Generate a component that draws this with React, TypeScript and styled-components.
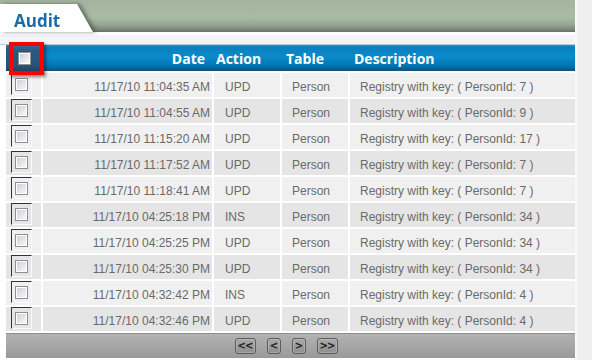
import styled, { createGlobalStyle } from "styled-components";

const GlobalStyle = createGlobalStyle`
  html, body {
    margin: 0;
    padding: 0;
    background: #ffffff;
  }
  body {
    font-family: "Liberation Sans", Arial, sans-serif;
  }
`;

const COLUMNS = "35px 169px 66px 66px 1fr";

const Page = styled.div`
  display: flex;
  width: 592px;
  height: 360px;
  overflow: hidden;
`;

const Main = styled.div`
  flex: 0 0 575px;
  display: flex;
  flex-direction: column;
`;

const ScrollStrip = styled.div`
  flex: 1;
  background: #efefef;
  border-left: 2px solid #f9f9f9;
`;

const TopBand = styled.div`
  height: 32px;
  box-sizing: border-box;
  padding-top: 4px;
  background: linear-gradient(
    #a3b59f 0%,
    #a9bba5 55%,
    #96a591 78%,
    #7d887a 92%,
    #666f63 100%
  );
`;

const TabShadow = styled.div`
  display: inline-block;
  filter: drop-shadow(3px 0 2px rgba(40, 50, 38, 0.55));
`;

const Tab = styled.div`
  width: 93px;
  height: 28px;
  box-sizing: border-box;
  padding: 5px 0 0 14px;
  background: #ffffff;
  clip-path: polygon(0 0, 77px 0, 100% 100%, 0 100%);
  color: #1b6ca6;
  font-family: "Open Sans", sans-serif;
  font-weight: 700;
  font-size: 17px;
  line-height: 23px;
`;

const Band = styled.div`
  height: 13px;
  background: linear-gradient(
    #ffffff 0px,
    #ffffff 3px,
    #f3f4f7 3px,
    #f3f4f7 12px,
    #b4cbdd 12px
  );
`;

const Grid = styled.div`
  padding-left: 6px;
`;

const HeaderRow = styled.div`
  position: relative;
  display: grid;
  grid-template-columns: ${COLUMNS};
  column-gap: 2px;
  height: 26px;
  background: linear-gradient(
    #3f86b8 0%,
    #0a7fbf 10%,
    #0a8bcb 45%,
    #0278b6 75%,
    #03629a 92%,
    #1d4c6e 100%
  );
  color: #ffffff;
  font-family: "Open Sans", sans-serif;
  font-weight: 700;
  font-size: 14px;
`;

const HeadCell = styled.div<{ $right?: boolean; $pad: number }>`
  display: flex;
  align-items: center;
  justify-content: ${(p) => (p.$right ? "flex-end" : "flex-start")};
  padding: ${(p) => (p.$right ? `0 ${p.$pad}px 0 0` : `0 0 0 ${p.$pad}px`)};
  white-space: nowrap;
`;

const CheckHeadCell = styled.div`
  display: flex;
  align-items: center;
  padding-left: 12px;
  margin-right: -2px;
  background: linear-gradient(#3c6d92 0%, #2a5a7f 20%, #265479 80%, #1d4565 100%);
`;

const Highlight = styled.div`
  position: absolute;
  left: 3px;
  top: -3px;
  width: 35px;
  height: 33px;
  box-sizing: border-box;
  border: 4px solid #ff0000;
  box-shadow: 2px 2px 3px rgba(0, 0, 0, 0.45);
  pointer-events: none;
`;

const Row = styled.div`
  display: grid;
  grid-template-columns: ${COLUMNS};
  column-gap: 2px;
  margin-top: 2px;
  height: 24px;
  color: #6a6a6a;
  font-size: 12px;
`;

const Cell = styled.div<{ $alt: boolean; $right?: boolean; $pad: number }>`
  display: flex;
  align-items: center;
  justify-content: ${(p) => (p.$right ? "flex-end" : "flex-start")};
  padding: ${(p) => (p.$right ? `3px ${p.$pad}px 0 0` : `3px 0 0 ${p.$pad}px`)};
  background: ${(p) => (p.$alt ? "#e5e5e5" : "#f0f0f0")};
  white-space: nowrap;
`;

const CheckCell = styled.div<{ $alt: boolean }>`
  display: flex;
  align-items: flex-start;
  padding-left: 5px;
  background: ${(p) => (p.$alt ? "#e5e5e5" : "#f0f0f0")};
`;

const Frame = styled.div`
  width: 21px;
  height: 22px;
  box-sizing: border-box;
  display: flex;
  align-items: center;
  justify-content: center;
  border-top: 1px solid #333333;
  border-left: 1px solid #333333;
  border-right: 1px solid #fafafa;
  border-bottom: 1px solid #fafafa;
`;

const Check = styled.span`
  display: block;
  width: 13px;
  height: 13px;
  box-sizing: border-box;
  border: 1px solid #8e8f91;
  box-shadow: inset 0 0 0 1px #ffffff;
  background: linear-gradient(135deg, #c9cdd6 0%, #e4e6eb 55%, #fbfbfc 100%);
`;

const Pager = styled.div`
  margin-top: 2px;
  height: 25px;
  box-sizing: border-box;
  display: flex;
  align-items: center;
  justify-content: center;
  gap: 11px;
  padding-right: 8px;
  border-top: 1px solid #8e8e8e;
  background: linear-gradient(#b2b2b2 0%, #a6a6a6 50%, #999999 100%);
`;

const PageButton = styled.button<{ $w: number }>`
  width: ${(p) => p.$w}px;
  height: 16px;
  padding: 0;
  box-sizing: border-box;
  border: 1px solid #5c5c5c;
  border-radius: 3px;
  background: linear-gradient(#a8a8a8, #909090);
  box-shadow: inset 0 0 0 1px rgba(255, 255, 255, 0.2);
  color: #1e1e1e;
  font-family: "DejaVu Sans", sans-serif;
  font-weight: 700;
  font-size: 10px;
  line-height: 14px;
  letter-spacing: -1px;
  text-indent: -1px;
`;

const rows = [
  ["11/17/10 11:04:35 AM", "UPD", "Person", "7"],
  ["11/17/10 11:04:55 AM", "UPD", "Person", "9"],
  ["11/17/10 11:15:20 AM", "UPD", "Person", "17"],
  ["11/17/10 11:17:52 AM", "UPD", "Person", "7"],
  ["11/17/10 11:18:41 AM", "UPD", "Person", "7"],
  ["11/17/10 04:25:18 PM", "INS", "Person", "34"],
  ["11/17/10 04:25:25 PM", "UPD", "Person", "34"],
  ["11/17/10 04:25:30 PM", "UPD", "Person", "34"],
  ["11/17/10 04:32:42 PM", "INS", "Person", "4"],
  ["11/17/10 04:32:46 PM", "UPD", "Person", "4"],
];

const App = () => (
  <>
    <GlobalStyle />
    <Page>
      <Main>
        <TopBand>
          <TabShadow>
            <Tab>Audit</Tab>
          </TabShadow>
        </TopBand>
        <Band />
        <Grid>
          <HeaderRow>
            <CheckHeadCell>
              <Check />
            </CheckHeadCell>
            <HeadCell $right $pad={7}>Date</HeadCell>
            <HeadCell $pad={2}>Action</HeadCell>
            <HeadCell $pad={4}>Table</HeadCell>
            <HeadCell $pad={4}>Description</HeadCell>
            <Highlight />
          </HeaderRow>
          {rows.map(([date, action, table, id], i) => {
            const alt = i % 2 === 1;
            return (
              <Row key={date}>
                <CheckCell $alt={alt}>
                  <Frame>
                    <Check />
                  </Frame>
                </CheckCell>
                <Cell $alt={alt} $right $pad={2}>{date}</Cell>
                <Cell $alt={alt} $pad={11}>{action}</Cell>
                <Cell $alt={alt} $pad={10}>{table}</Cell>
                <Cell $alt={alt} $pad={10}>Registry with key: ( PersonId: {id} )</Cell>
              </Row>
            );
          })}
          <Pager>
            <PageButton $w={21}>&lt;&lt;</PageButton>
            <PageButton $w={14}>&lt;</PageButton>
            <PageButton $w={14}>&gt;</PageButton>
            <PageButton $w={21}>&gt;&gt;</PageButton>
          </Pager>
        </Grid>
      </Main>
      <ScrollStrip />
    </Page>
  </>
);

export default App;
